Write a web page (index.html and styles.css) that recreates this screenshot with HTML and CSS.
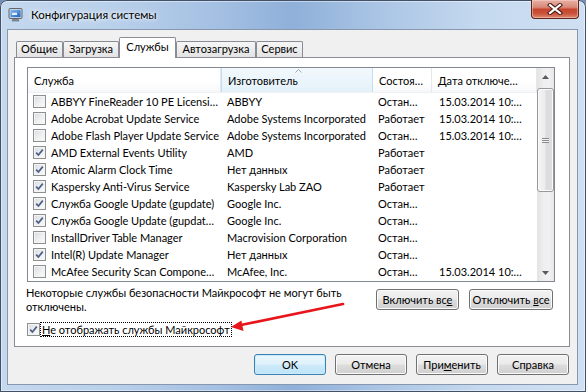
FILE: index.html
```html
<!DOCTYPE html>
<html lang="ru">
<head>
<meta charset="utf-8">
<title>Конфигурация системы</title>
<link rel="stylesheet" href="styles.css">
</head>
<body>
<div class="window">
  <div class="titlebar">
    <svg class="app-icon" width="16" height="16" viewBox="0 0 16 16">
      <defs>
        <linearGradient id="scr" x1="0" y1="0" x2="1" y2="1">
          <stop offset="0" stop-color="#7fc4f4"/>
          <stop offset="1" stop-color="#1c5fc4"/>
        </linearGradient>
      </defs>
      <rect x="1" y="1.5" width="13" height="10" rx="1" fill="#c9ced6" stroke="#5f6772"/>
      <rect x="2.5" y="3" width="10" height="7" fill="url(#scr)"/>
      <rect x="4" y="4.5" width="5" height="3.5" fill="#ffffff" opacity="0.85"/>
      <rect x="4" y="4.5" width="5" height="1" fill="#2e6bc8"/>
      <path d="M5 12 h5 l1 2 h-7 z" fill="#8a9099" stroke="#5f6772" stroke-width="0.6"/>
    </svg>
    <span class="title">Конфигурация системы</span>
    <div class="close-btn">
      <svg width="16" height="12" viewBox="0 0 16 12">
        <path d="M3 2 L13 10 M13 2 L3 10" stroke="#4a1d16" stroke-width="4.2" stroke-linecap="square"/>
        <path d="M3 2 L13 10 M13 2 L3 10" stroke="#ffffff" stroke-width="2.2" stroke-linecap="square"/>
      </svg>
    </div>
  </div>

  <div class="client">
    <div class="tabs">
      <div class="tab tab--w47">Общие</div>
      <div class="tab tab--w56">Загрузка</div>
      <div class="tab tab--w57 tab--active">Службы</div>
      <div class="tab tab--w80">Автозагрузка</div>
      <div class="tab tab--w47">Сервис</div>
    </div>

    <div class="pane">
      <div class="list">
        <div class="grid">
          <div class="head">
            <div class="hcell c1">Служба</div>
            <div class="hcell c2 sorted">Изготовитель
              <svg class="sort-arrow" width="7" height="4" viewBox="0 0 7 4"><path d="M0.5 3.5 L3.5 0.5 L6.5 3.5" fill="none" stroke="#97a9bc" stroke-width="1"/></svg>
            </div>
            <div class="hcell c3">Состоя…</div>
            <div class="hcell c4">Дата отключе…</div>
          </div>

          <div class="row"><div class="cell c1"><span class="cb"></span><span class="name">ABBYY FineReader 10 PE Licensi…</span></div><div class="cell c2">ABBYY</div><div class="cell c3">Остан…</div><div class="cell c4">15.03.2014 10:…</div></div>
          <div class="row"><div class="cell c1"><span class="cb"></span><span class="name">Adobe Acrobat Update Service</span></div><div class="cell c2">Adobe Systems Incorporated</div><div class="cell c3">Работает</div><div class="cell c4">15.03.2014 10:…</div></div>
          <div class="row"><div class="cell c1"><span class="cb"></span><span class="name">Adobe Flash Player Update Service</span></div><div class="cell c2">Adobe Systems Incorporated</div><div class="cell c3">Остан…</div><div class="cell c4">15.03.2014 10:…</div></div>
          <div class="row"><div class="cell c1"><span class="cb cb--on"><svg width="11" height="11" viewBox="0 0 11 11"><path d="M2.2 5.6 L4.4 8 L8.8 2.6" fill="none" stroke="#4b5f86" stroke-width="1.7"/></svg></span><span class="name">AMD External Events Utility</span></div><div class="cell c2">AMD</div><div class="cell c3">Работает</div><div class="cell c4"></div></div>
          <div class="row"><div class="cell c1"><span class="cb cb--on"><svg width="11" height="11" viewBox="0 0 11 11"><path d="M2.2 5.6 L4.4 8 L8.8 2.6" fill="none" stroke="#4b5f86" stroke-width="1.7"/></svg></span><span class="name">Atomic Alarm Clock Time</span></div><div class="cell c2">Нет данных</div><div class="cell c3">Работает</div><div class="cell c4"></div></div>
          <div class="row"><div class="cell c1"><span class="cb cb--on"><svg width="11" height="11" viewBox="0 0 11 11"><path d="M2.2 5.6 L4.4 8 L8.8 2.6" fill="none" stroke="#4b5f86" stroke-width="1.7"/></svg></span><span class="name">Kaspersky Anti-Virus Service</span></div><div class="cell c2">Kaspersky Lab ZAO</div><div class="cell c3">Работает</div><div class="cell c4"></div></div>
          <div class="row"><div class="cell c1"><span class="cb cb--on"><svg width="11" height="11" viewBox="0 0 11 11"><path d="M2.2 5.6 L4.4 8 L8.8 2.6" fill="none" stroke="#4b5f86" stroke-width="1.7"/></svg></span><span class="name">Служба Google Update (gupdate)</span></div><div class="cell c2">Google Inc.</div><div class="cell c3">Остан…</div><div class="cell c4"></div></div>
          <div class="row"><div class="cell c1"><span class="cb cb--on"><svg width="11" height="11" viewBox="0 0 11 11"><path d="M2.2 5.6 L4.4 8 L8.8 2.6" fill="none" stroke="#4b5f86" stroke-width="1.7"/></svg></span><span class="name">Служба Google Update (gupdat…</span></div><div class="cell c2">Google Inc.</div><div class="cell c3">Остан…</div><div class="cell c4"></div></div>
          <div class="row"><div class="cell c1"><span class="cb"></span><span class="name">InstallDriver Table Manager</span></div><div class="cell c2">Macrovision Corporation</div><div class="cell c3">Остан…</div><div class="cell c4"></div></div>
          <div class="row"><div class="cell c1"><span class="cb cb--on"><svg width="11" height="11" viewBox="0 0 11 11"><path d="M2.2 5.6 L4.4 8 L8.8 2.6" fill="none" stroke="#4b5f86" stroke-width="1.7"/></svg></span><span class="name">Intel(R) Update Manager</span></div><div class="cell c2">Нет данных</div><div class="cell c3">Остан…</div><div class="cell c4"></div></div>
          <div class="row"><div class="cell c1"><span class="cb"></span><span class="name">McAfee Security Scan Compone…</span></div><div class="cell c2">McAfee, Inc.</div><div class="cell c3">Остан…</div><div class="cell c4">15.03.2014 10:…</div></div>
        </div>

        <div class="scrollbar">
          <div class="sb-btn"><svg width="7" height="4" viewBox="0 0 7 4"><path d="M0 4 L3.5 0 L7 4 Z" fill="#5a5a5a"/></svg></div>
          <div class="sb-thumb"><span class="grip"></span></div>
          <div class="sb-btn sb-btn--down"><svg width="7" height="4" viewBox="0 0 7 4"><path d="M0 0 L3.5 4 L7 0 Z" fill="#5a5a5a"/></svg></div>
        </div>
      </div>

      <div class="info">
        <p class="note">Некоторые службы безопасности Майкрософт не могут быть<br>отключены.</p>
        <div class="info-btns">
          <button class="btn btn--w83">Включить вс<u>е</u></button>
          <button class="btn btn--w84">Отключить <u>в</u>се</button>
        </div>
      </div>

      <label class="hide-ms">
        <span class="cb cb--on"><svg width="11" height="11" viewBox="0 0 11 11"><path d="M2.2 5.6 L4.4 8 L8.8 2.6" fill="none" stroke="#4b5f86" stroke-width="1.7"/></svg></span>
        <span class="focus-label"><u>Н</u>е отображать службы Майкрософт</span>
      </label>
    </div>

    <div class="footer">
      <button class="btn btn--default">OK</button>
      <button class="btn">Отмена</button>
      <button class="btn">При<u>м</u>енить</button>
      <button class="btn">Справка</button>
    </div>
  </div>

  <svg class="annot-arrow" width="586" height="392" viewBox="0 0 586 392">
    <line x1="343" y1="304" x2="241" y2="325" stroke="#e8161c" stroke-width="2.6" stroke-linecap="round"/>
    <polygon points="231,327 243.5,331 241.4,320.5" fill="#e8161c"/>
  </svg>
</div>
</body>
</html>
```

FILE: styles.css
```css
* { box-sizing: border-box; }
html, body { margin: 0; padding: 0; }
body {
  width: 586px;
  height: 392px;
  overflow: hidden;
  font-family: Lato, "Liberation Sans", sans-serif;
  font-size: 11px;
  color: #000;
  background: #6f8fb8;
}

.window {
  position: relative;
  width: 586px;
  height: 392px;
  padding: 0 8px 7px 7px;
  display: flex;
  flex-direction: column;
  border-radius: 7px 7px 0 0;
  background:
    linear-gradient(to right, #c4d8ee 0%, #bad1eb 18%, #a3bfe2 38%, #8fb0d9 50%, #a9c4e4 64%, #c5d9ef 82%, #d0e0f2 100%);
  box-shadow: inset 0 0 0 1px #425068, inset 0 0 0 2px rgba(255,255,255,0.45);
}

/* ---------- title bar ---------- */
.titlebar {
  height: 29px;
  flex: none;
  display: flex;
  align-items: flex-start;
}
.app-icon { margin: 7px 0 0 1px; flex: none; }
.title {
  margin: 7px 0 0 7px;
  line-height: 16px;
  font-size: 11.5px;
  text-shadow: 0 0 6px rgba(255,255,255,0.95), 0 0 3px rgba(255,255,255,0.9);
}
.close-btn {
  margin-left: auto;
  margin-right: -1px;
  width: 48px;
  height: 19px;
  display: flex;
  align-items: center;
  justify-content: center;
  border: 1px solid #5b261d;
  border-top: none;
  border-radius: 0 0 4px 4px;
  background: linear-gradient(#e7b0a5 0%, #d98a78 40%, #c8452f 52%, #c9533b 75%, #df8a70 100%);
  box-shadow: inset 0 0 0 1px rgba(255,220,210,0.45);
}

/* ---------- client ---------- */
.client {
  flex: 1;
  display: flex;
  flex-direction: column;
  background: #f0f0f0;
  border: 1px solid #8798ae;
}

.tabs {
  height: 27px;
  flex: none;
  display: flex;
  align-items: flex-end;
  margin: 0 6px;
  padding: 7px 0 0 2px;
}
.tab {
  height: 16px;
  line-height: 14px;
  padding: 0;
  text-align: center;
  border: 1px solid #898c95;
  border-bottom: none;
  border-radius: 2px 2px 0 0;
  background: linear-gradient(#f6f6f6, #e3e3e3);
  white-space: nowrap;
}
.tab--w47 { width: 47px; }
.tab--w56 { width: 56px; }
.tab--w57 { width: 57px; }
.tab--w80 { width: 80px; }
.tab--active {
  height: 21px;
  line-height: 18px;
  margin-bottom: -1px;
  position: relative;
  z-index: 1;
  background: #ffffff;
}

.pane {
  height: 290px;
  flex: none;
  margin: 0 7px 0 6px;
  border: 1px solid #898c95;
  background: #ffffff;
  display: flex;
  flex-direction: column;
}

/* ---------- list view ---------- */
.list {
  height: 215px;
  flex: none;
  margin: 9px 14px 0 12px;
  border: 1px solid #828790;
  display: flex;
  overflow: hidden;
}
.grid {
  flex: 1;
  min-width: 0;
  display: flex;
  flex-direction: column;
}
.head {
  height: 25px;
  flex: none;
  display: flex;
  background: linear-gradient(#ffffff 0%, #ffffff 60%, #f6f7f9 100%);
  border-bottom: 1px solid #eef0f3;
}
.hcell {
  position: relative;
  padding: 4px 0 0 6px;
  line-height: 18px;
  border-right: 1px solid #e3e8ee;
  white-space: nowrap;
  overflow: hidden;
}
.hcell.sorted {
  background: linear-gradient(#f2f9fd 0%, #e4f1fa 100%);
  border-left: 1px solid #c4def1;
  border-right: 1px solid #c4def1;
}
.sort-arrow {
  position: absolute;
  top: 1px;
  left: 73px;
}
.c1 { width: 193px; flex: none; }
.c2 { width: 152px; flex: none; }
.c3 { width: 59px; flex: none; }
.c4 { flex: 1; }

.row {
  height: 17px;
  flex: none;
  display: flex;
  align-items: center;
}
.cell {
  padding-left: 6px;
  line-height: 17px;
  white-space: nowrap;
  overflow: hidden;
}
.cell.c3 { padding-left: 5px; }
.cell.c4 { padding-left: 7px; }
.cell.c1 {
  display: flex;
  align-items: center;
  padding-left: 5px;
}
.name { margin-left: 5px; }

/* checkbox */
.cb {
  width: 13px;
  height: 13px;
  flex: none;
  display: inline-flex;
  align-items: center;
  justify-content: center;
  border: 1px solid #8e8f8f;
  background: linear-gradient(135deg, #d8dbe0 0%, #eceef0 50%, #fbfbfb 100%);
  box-shadow: inset 0 0 0 1px #f4f4f4;
}

/* scrollbar */
.scrollbar {
  width: 17px;
  flex: none;
  display: flex;
  flex-direction: column;
  background: linear-gradient(to right, #e3e3e3 0%, #efefef 40%, #f1f1f1 70%, #e7e7e7 100%);
}
.sb-btn {
  height: 17px;
  flex: none;
  display: flex;
  align-items: center;
  justify-content: center;
}
.sb-btn--down { margin-top: auto; }
.sb-thumb {
  height: 104px;
  flex: none;
  margin: 3px 0 0 0;
  border: 1px solid #979797;
  border-radius: 3px;
  background: linear-gradient(to right, #f5f5f5 0%, #ececec 45%, #dcdcdc 55%, #dedede 100%);
  box-shadow: inset 0 0 0 1px #fbfbfb;
  display: flex;
  align-items: center;
  justify-content: center;
}
.grip {
  width: 7px;
  height: 5px;
  background: repeating-linear-gradient(#8a8a8a 0 1px, #f4f4f4 1px 2px);
}

/* info area */
.info {
  display: flex;
  justify-content: space-between;
  margin: 4px 16px 0 11px;
}
.note {
  margin: 0;
  line-height: 14px;
  white-space: nowrap;
}
.info-btns {
  display: flex;
  gap: 10px;
  margin-top: 3px;
}

.btn {
  display: block;
  height: 21px;
  width: 72px;
  padding: 0;
  font: inherit;
  line-height: 19px;
  text-align: center;
  white-space: nowrap;
  color: #000;
  border: 1px solid #707070;
  border-radius: 3px;
  background: linear-gradient(#f2f2f2 0%, #ebebeb 48%, #dddddd 52%, #cfcfcf 100%);
  box-shadow: inset 0 0 0 1px #fbfbfb;
}
.btn--w83 { width: 83px; }
.btn--w84 { width: 84px; }
.btn--default {
  border-color: #3c7fb1;
  background: linear-gradient(#eaf6fd 0%, #e0f2fc 48%, #cfeafa 52%, #bde3f8 100%);
  box-shadow: inset 0 0 0 1px #c9ecfd;
}

.hide-ms {
  display: flex;
  align-items: flex-start;
  margin: 8px 0 0 12px;
}
.hide-ms .cb { margin-top: 1px; }
.focus-label {
  margin-left: 0;
  padding: 0 1px;
  line-height: 13px;
  border: 1px dotted #000;
  white-space: nowrap;
}

.footer {
  display: flex;
  justify-content: flex-end;
  gap: 9px;
  margin: 7px 8px 0 0;
}

.annot-arrow {
  position: absolute;
  left: 0;
  top: 0;
  pointer-events: none;
}
```
